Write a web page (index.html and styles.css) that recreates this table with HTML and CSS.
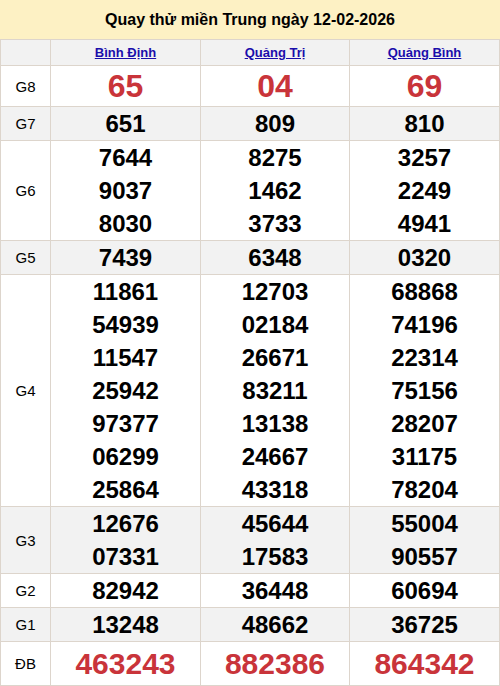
FILE: index.html
```html
<!DOCTYPE html>
<html lang="vi">
<head>
<meta charset="utf-8">
<link rel="stylesheet" href="styles.css">
</head>
<body>
<div class="title">Quay thử miền Trung ngày 12-02-2026</div>
<table class="kq">
  <colgroup><col class="c0"><col class="c1"><col class="c2"><col class="c3"></colgroup>
  <tr class="head alt"><td></td><td><a href="#">Bình Định</a></td><td><a href="#">Quảng Trị</a></td><td><a href="#">Quảng Bình</a></td></tr>
  <tr class="g8"><td class="lbl">G8</td><td><div class="n red">65</div></td><td><div class="n red">04</div></td><td><div class="n red">69</div></td></tr>
  <tr class="alt"><td class="lbl">G7</td><td><div class="n">651</div></td><td><div class="n">809</div></td><td><div class="n">810</div></td></tr>
  <tr><td class="lbl">G6</td>
    <td><div class="n">7644</div><div class="n">9037</div><div class="n">8030</div></td>
    <td><div class="n">8275</div><div class="n">1462</div><div class="n">3733</div></td>
    <td><div class="n">3257</div><div class="n">2249</div><div class="n">4941</div></td></tr>
  <tr class="alt"><td class="lbl">G5</td><td><div class="n">7439</div></td><td><div class="n">6348</div></td><td><div class="n">0320</div></td></tr>
  <tr><td class="lbl">G4</td>
    <td><div class="n">11861</div><div class="n">54939</div><div class="n">11547</div><div class="n">25942</div><div class="n">97377</div><div class="n">06299</div><div class="n">25864</div></td>
    <td><div class="n">12703</div><div class="n">02184</div><div class="n">26671</div><div class="n">83211</div><div class="n">13138</div><div class="n">24667</div><div class="n">43318</div></td>
    <td><div class="n">68868</div><div class="n">74196</div><div class="n">22314</div><div class="n">75156</div><div class="n">28207</div><div class="n">31175</div><div class="n">78204</div></td></tr>
  <tr class="alt"><td class="lbl">G3</td>
    <td><div class="n">12676</div><div class="n">07331</div></td>
    <td><div class="n">45644</div><div class="n">17583</div></td>
    <td><div class="n">55004</div><div class="n">90557</div></td></tr>
  <tr><td class="lbl">G2</td><td><div class="n">82942</div></td><td><div class="n">36448</div></td><td><div class="n">60694</div></td></tr>
  <tr class="alt"><td class="lbl">G1</td><td><div class="n">13248</div></td><td><div class="n">48662</div></td><td><div class="n">36725</div></td></tr>
  <tr class="db"><td class="lbl">ĐB</td><td><div class="n red">463243</div></td><td><div class="n red">882386</div></td><td><div class="n red">864342</div></td></tr>
</table>
</body>
</html>
```
FILE: styles.css
```css
html, body { margin: 0; padding: 0; background: #fff; }
body { font-family: "Liberation Sans", Arial, sans-serif; color: #000; width: 500px; }
.title {
  height: 39px;
  line-height: 39px;
  background: #fdf1c4;
  text-align: center;
  font-weight: bold;
  font-size: 16px;
}
.kq {
  width: 500px;
  border-collapse: collapse;
  table-layout: fixed;
}
.c0 { width: 50px; }
.c1 { width: 150px; }
.c2 { width: 149px; }
.c3 { width: 150px; }
.kq td {
  border: 1px solid #ddd5cc;
  padding: 0;
  text-align: center;
  vertical-align: middle;
}
.alt td { background: #f2f2f2; }
.head td { height: 25px; font-size: 13px; font-weight: bold; }
.head a { color: #1a0dab; text-decoration: underline; }
.lbl { font-size: 15px; }
.n { font-size: 24px; font-weight: bold; line-height: 33px; }
.n.red { color: #c9343a; }
.g8 .n { font-size: 32px; line-height: 40px; }
.db .n { font-size: 30px; line-height: 43px; }
```
